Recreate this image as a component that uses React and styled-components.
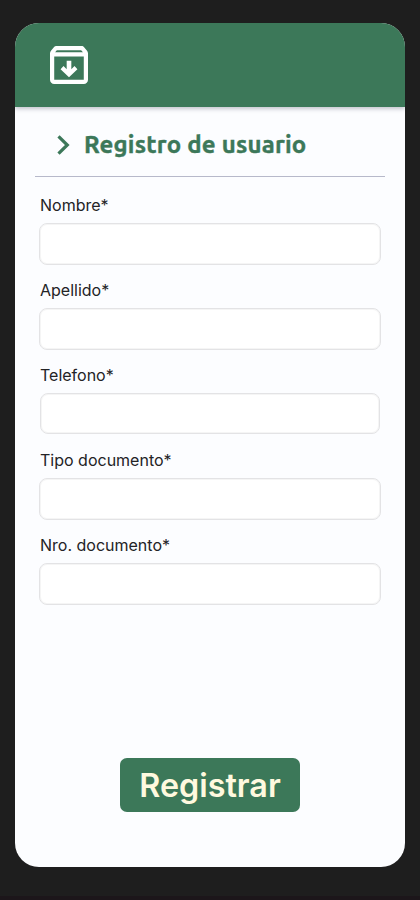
import React from "react";
import styled, { createGlobalStyle } from "styled-components";

const GlobalStyle = createGlobalStyle`
  * { box-sizing: border-box; }
  body { margin: 0; background: #1e1e1e; font-family: Inter, sans-serif; }
`;

const Page = styled.main`
  height: 900px;
  padding: 23px 15px 33px;
  background: #1e1e1e;
  border-bottom: 4px solid #1c161a;
`;

const Phone = styled.div`
  height: 844px;
  display: flex;
  flex-direction: column;
  background: #fcfdff;
  border-radius: 24px;
  overflow: hidden;
`;

const Header = styled.header`
  height: 84px;
  flex: none;
  display: flex;
  align-items: center;
  padding-left: 35px;
  background: #3c7859;
  box-shadow: 0 2px 4px rgba(30, 30, 60, 0.25);
`;

const TitleBar = styled.div`
  height: 70px;
  flex: none;
  margin: 0 20px;
  padding: 6px 0 0 22px;
  display: flex;
  align-items: center;
  border-bottom: 1px solid #b7b9ca;
`;

const Title = styled.h1`
  margin: 0 0 0 14px;
  color: #3c7859;
  font: 700 24px/30px Ubuntu, "Noto Sans", sans-serif;
  letter-spacing: 0.2px;
  -webkit-text-stroke: 0.4px #3c7859;
  white-space: nowrap;
`;

const Form = styled.form`
  flex: 1;
  display: flex;
  flex-direction: column;
  padding: 17px 24px 55px;
`;

const Field = styled.label`
  height: 85px;
  display: flex;
  flex-direction: column;
  color: #232326;
  font-size: 16px;
  line-height: 22px;
`;

const LabelText = styled.span`
  height: 29px;
  padding-left: 1px;
`;

const Input = styled.input`
  width: ${({ $compact }) => ($compact ? 340 : 342)}px;
  height: ${({ $compact }) => ($compact ? 41 : 42)}px;
  margin-left: ${({ $compact }) => ($compact ? 1 : 0)}px;
  border: 1px solid #e3e3e5;
  box-shadow: inset 0 0 0 1px #f5f5f5;
  border-radius: 8px;
  background: #fff;
`;

const Submit = styled.button`
  width: 180px;
  height: 54px;
  margin: auto auto 0;
  padding: 2px 0 0;
  border: 0;
  border-radius: 7px;
  background: #3c7859;
  color: #fff9df;
  font: 600 32.3px/52px Inter, sans-serif;
`;

const fields = [
  { label: "Nombre*" },
  { label: "Apellido*" },
  { label: "Telefono*", compact: true },
  { label: "Tipo documento*" },
  { label: "Nro. documento*" },
];

export default function App() {
  return (
    <Page>
      <GlobalStyle />
      <Phone>
        <Header>
          <svg width="38" height="38" viewBox="3 3 18 18" fill="#fff">
            <path d="M20.54 5.23l-1.39-1.68C18.88 3.21 18.47 3 18 3H6c-.47 0-.88.21-1.16.55L3.46 5.23C3.17 5.57 3 6.02 3 6.5V19c0 1.1.9 2 2 2h14c1.1 0 2-.9 2-2V6.5c0-.48-.17-.93-.46-1.27zM6.24 5h11.52l.83 1H5.42l.82-1zM5 19V8h14v11H5z" />
            <path d="M10.9 10v4l-1.5-1.5L8 14l4 3.8 4-3.8-1.4-1.5-1.5 1.5v-4z" />
          </svg>
        </Header>
        <TitleBar>
          <svg width="13" height="20" viewBox="0 0 13 20" fill="none" stroke="#3c7859" strokeWidth="3.2">
            <path d="M1.5 1.3 L10.3 10 L1.5 18.7" />
          </svg>
          <Title>Registro de usuario</Title>
        </TitleBar>
        <Form>
          {fields.map(({ label, compact }) => (
            <Field key={label}>
              <LabelText>{label}</LabelText>
              <Input $compact={compact} />
            </Field>
          ))}
          <Submit type="button">Registrar</Submit>
        </Form>
      </Phone>
    </Page>
  );
}
